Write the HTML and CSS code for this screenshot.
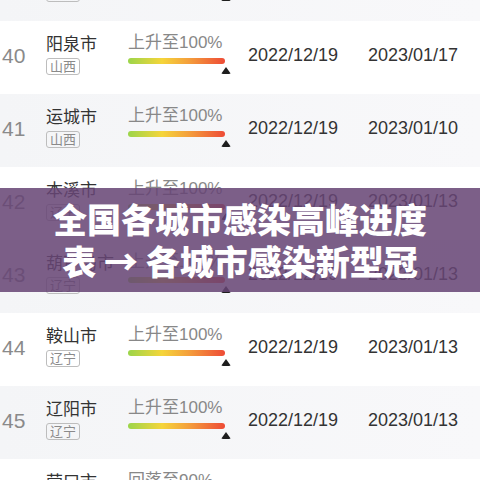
FILE: index.html
```html
<!DOCTYPE html>
<html lang="zh-CN">
<head>
<meta charset="utf-8"/>
<title>全国各城市感染高峰进度表</title>
<link rel="stylesheet" href="styles.css">
</head>
<body>
<div class="page">
  <div class="list">
    <div class="row odd">
      <div class="rank">39</div>
      <div class="city"><div class="name">晋城市</div><span class="tag">山西</span></div>
      <div class="trend"><div class="label">上升至100%</div><div class="bar"></div><div class="mark"></div></div>
      <div class="date">2022/12/19</div>
      <div class="date">2023/01/17</div>
    </div>
    <div class="row">
      <div class="rank">40</div>
      <div class="city"><div class="name">阳泉市</div><span class="tag">山西</span></div>
      <div class="trend"><div class="label">上升至100%</div><div class="bar"></div><div class="mark"></div></div>
      <div class="date">2022/12/19</div>
      <div class="date">2023/01/17</div>
    </div>
    <div class="row odd">
      <div class="rank">41</div>
      <div class="city"><div class="name">运城市</div><span class="tag">山西</span></div>
      <div class="trend"><div class="label">上升至100%</div><div class="bar"></div><div class="mark"></div></div>
      <div class="date">2022/12/19</div>
      <div class="date">2023/01/10</div>
    </div>
    <div class="row">
      <div class="rank">42</div>
      <div class="city"><div class="name">本溪市</div><span class="tag">辽宁</span></div>
      <div class="trend"><div class="label">上升至100%</div><div class="bar"></div><div class="mark"></div></div>
      <div class="date">2022/12/19</div>
      <div class="date">2023/01/13</div>
    </div>
    <div class="row odd">
      <div class="rank">43</div>
      <div class="city"><div class="name">葫芦岛市</div><span class="tag">辽宁</span></div>
      <div class="trend"><div class="label">上升至100%</div><div class="bar"></div><div class="mark"></div></div>
      <div class="date">2022/12/19</div>
      <div class="date">2023/01/13</div>
    </div>
    <div class="row">
      <div class="rank">44</div>
      <div class="city"><div class="name">鞍山市</div><span class="tag">辽宁</span></div>
      <div class="trend"><div class="label">上升至100%</div><div class="bar"></div><div class="mark"></div></div>
      <div class="date">2022/12/19</div>
      <div class="date">2023/01/13</div>
    </div>
    <div class="row odd">
      <div class="rank">45</div>
      <div class="city"><div class="name">辽阳市</div><span class="tag">辽宁</span></div>
      <div class="trend"><div class="label">上升至100%</div><div class="bar"></div><div class="mark"></div></div>
      <div class="date">2022/12/19</div>
      <div class="date">2023/01/13</div>
    </div>
    <div class="row">
      <div class="rank">46</div>
      <div class="city"><div class="name">营口市</div><span class="tag">辽宁</span></div>
      <div class="trend"><div class="label">回落至90%</div><div class="bar"></div><div class="mark"></div></div>
      <div class="date">2022/12/19</div>
      <div class="date">2023/01/13</div>
    </div>
  </div>
  <div class="banner">全国各城市感染高峰进度<br>表 → 各城市感染新型冠</div>
</div>
</body>
</html>
```

FILE: styles.css
```css
html, body {
    margin: 0;
    background: #fff;
}
.page {
    position: relative;
    width: 480px;
    height: 480px;
    overflow: hidden;
    font-family: 'Liberation Sans', 'Noto Sans CJK SC', sans-serif;
}
.list {
    margin-top: -52px;
}
.row {
    display: grid;
    grid-template-columns: 46px 82px 120px 120px 112px;
    height: 73px;
    background: #fff;
}
.row.odd {
    background: linear-gradient(90deg, #f4f5f7, #f8f8fa);
}
.rank {
    margin-top: 23px;
    padding-left: 2px;
    font-size: 21px;
    line-height: 24px;
    color: #8a8a8a;
}
.city {
    margin-top: 14px;
}
.name {
    font-size: 17px;
    line-height: 20px;
    color: #333;
    white-space: nowrap;
}
.tag {
    display: inline-block;
    margin-top: 3px;
    padding: 0 3px;
    border: 1px solid #bdbdbd;
    border-radius: 3px;
    font-size: 13px;
    line-height: 15px;
    color: #8a8a8a;
}
.trend {
    margin-top: 12px;
}
.label {
    font-size: 17px;
    line-height: 20px;
    color: #888;
    white-space: nowrap;
}
.bar {
    margin-top: 5px;
    width: 97px;
    height: 6px;
    border-radius: 3px;
    background: linear-gradient(90deg, #9bd54a 0%, #f5d53a 35%, #f4a03c 62%, #ee4b36 100%);
}
.mark {
    margin: 3px 0 0 93px;
    width: 0;
    height: 0;
    border-left: 5px solid transparent;
    border-right: 5px solid transparent;
    border-bottom: 7px solid #1e1e1e;
    border-radius: 2px;
}
.date {
    margin-top: 24px;
    font-size: 18px;
    line-height: 20px;
    color: #333;
}
.banner {
    position: absolute;
    left: 0;
    right: 0;
    top: 188px;
    height: 104px;
    box-sizing: border-box;
    padding-top: 10px;
    background: rgba(102, 69, 117, 0.86);
    color: #fff;
    text-align: center;
    font-family: 'Noto Sans CJK SC', sans-serif;
    font-weight: 900;
    font-size: 34px;
    line-height: 42px;
}
```
